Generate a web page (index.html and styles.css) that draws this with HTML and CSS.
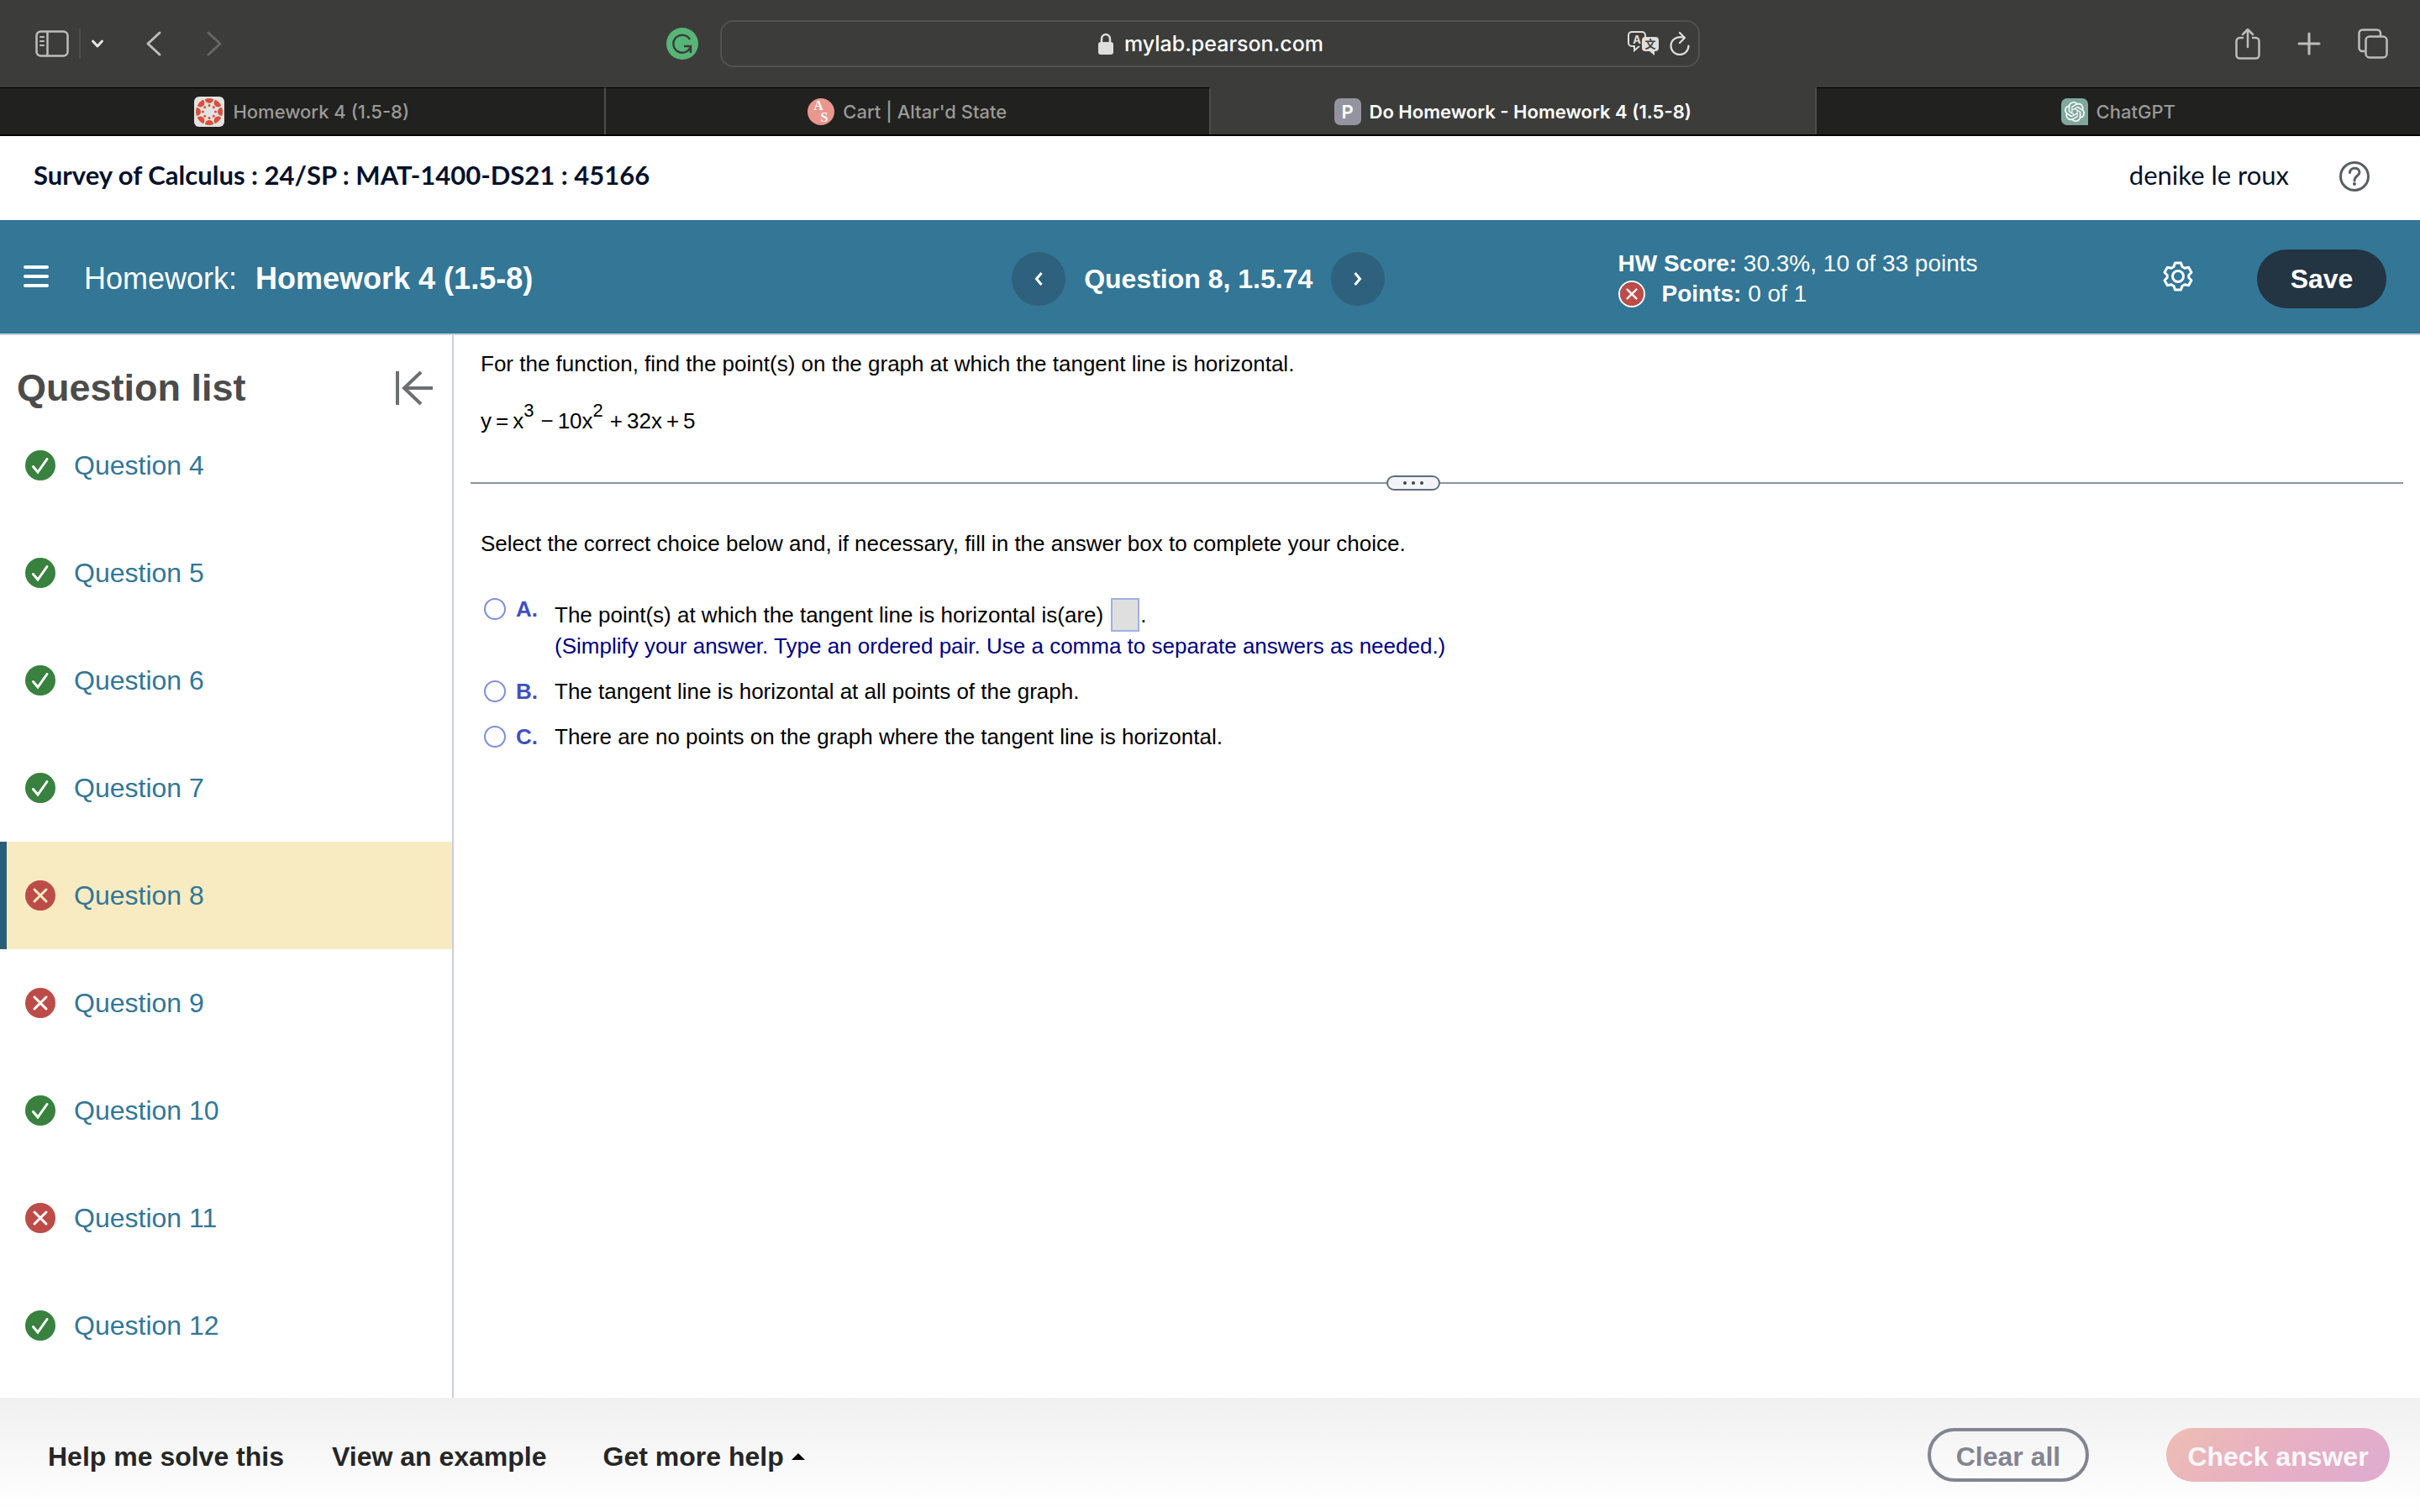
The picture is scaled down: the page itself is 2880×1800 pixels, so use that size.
FILE: index.html
```html
<!DOCTYPE html>
<html lang="en">
    <head>
        <meta charset="utf-8">
        <title>Do Homework - Homework 4 (1.5-8)</title>
        <link rel="stylesheet" href="styles.css">
    </head>
    <body>
        <!-- shared status icons -->
        <svg class="defs" width="0" height="0">
            <symbol id="ok" viewBox="0 0 36 36">
                <circle cx="18" cy="18" r="18" fill="#38813f"/>
                <path d="M9.500 19.500l5.500 6.500L26 10.500" fill="none" stroke="#fff" stroke-width="3" stroke-linecap="round"/>
            </symbol>
            <symbol id="bad" viewBox="0 0 36 36">
                <circle cx="18" cy="18" r="18" fill="#bd4c48"/>
                <path d="M11 11l14 14M25 11L11 25" stroke="currentColor" stroke-width="3" stroke-linecap="round"/>
            </symbol>
        </svg>

        <div class="toolbar">
            <div class="tools">
                <button class="icon" aria-label="Sidebar">
                    <svg width="40" height="32" viewBox="0 0 40 32" fill="none" stroke="#bdbdbb" stroke-width="2.500" stroke-linecap="round">
                        <rect x="1.500" y="1.500" width="37" height="29" rx="5"/>
                        <path d="M14.500 2v28"/><path d="M6 8h4M6 13h4M6 18h4" stroke-width="2"/>
                    </svg>
                </button>
                <span class="split"></span>
                <button class="icon down" aria-label="Tab groups">
                    <svg width="16" height="12" viewBox="0 0 16 12" fill="none" stroke="#e6e6e5" stroke-width="3" stroke-linecap="round" stroke-linejoin="round"><path d="M2.500 3L8 9l5.500-6"/></svg>
                </button>
                <button class="icon back" aria-label="Back">
                    <svg width="20" height="32" viewBox="0 0 20 32" fill="none" stroke="#bdbdbb" stroke-width="3" stroke-linecap="round" stroke-linejoin="round"><path d="M17 3L3 16l14 13"/></svg>
                </button>
                <button class="icon forward" aria-label="Forward">
                    <svg width="20" height="32" viewBox="0 0 20 32" fill="none" stroke="#666664" stroke-width="3" stroke-linecap="round" stroke-linejoin="round"><path d="M3 3l14 13L3 29"/></svg>
                </button>
                <button class="icon grammar" aria-label="Grammarly">
                    <svg width="38" height="38" viewBox="0 0 38 38" fill="none" stroke="#3c3c3a" stroke-width="2.500">
                        <circle cx="19" cy="19" r="19" fill="#57b576" stroke="none"/>
                        <path d="M28 14a10.500 10.500 0 1 0 .5 9.500M21 22h8v8"/>
                    </svg>
                </button>
            </div>
            <div class="address">
                <label class="site">
                    <svg width="20" height="26" viewBox="0 0 20 26"><path d="M5 12V7.500a5 5.500 0 0 1 10 0V12" fill="none" stroke="#dededd" stroke-width="2.500"/><rect x="1" y="11" width="18" height="15" rx="3" fill="#dededd"/></svg>
                    <input type="text" value="mylab.pearson.com" aria-label="Address">
                </label>
                <div class="addressTools">
                    <button class="icon" aria-label="Translate">
                        <svg width="38" height="30" viewBox="0 0 38 30">
                            <path d="M14 18l-6 5v-5H5a4 4 0 0 1-4-4V5a4 4 0 0 1 4-4h12a4 4 0 0 1 4 4v2" fill="none" stroke="#dededd" stroke-width="2"/>
                            <text x="11" y="15" class="glyph" fill="#dededd">A</text>
                            <path d="M21 7h12a4 4 0 0 1 4 4v9a4 4 0 0 1-4 4h-1v5l-6-5h-5a4 4 0 0 1-4-4v-9a4 4 0 0 1 4-4z" fill="#dededd"/>
                            <text x="27" y="20" class="glyph" fill="#3c3c3a">文</text>
                        </svg>
                    </button>
                    <button class="icon" aria-label="Reload">
                        <svg width="24" height="30" viewBox="0 0 24 30" fill="none" stroke="#dededd" stroke-width="2.200" stroke-linecap="round" stroke-linejoin="round"><path d="M17 7.500C8 5.500 1.500 10.500 1.500 17.500a10.500 10.500 0 0 0 21 0M12 2l6 6-6 6"/></svg>
                    </button>
                </div>
            </div>
            <div class="tools end">
                <button class="icon" aria-label="Share">
                    <svg width="30" height="38" viewBox="0 0 30 38" fill="none" stroke="#bdbdbb" stroke-width="2.500" stroke-linecap="round" stroke-linejoin="round"><path d="M9 12H5.500a4 4 0 0 0-4 4v16.500a4 4 0 0 0 4 4h19a4 4 0 0 0 4-4V16a4 4 0 0 0-4-4H21M15 23V2M9 8l6-6 6 6"/></svg>
                </button>
                <button class="icon" aria-label="New tab">
                    <svg width="28" height="28" viewBox="0 0 28 28" stroke="#bdbdbb" stroke-width="3" stroke-linecap="round"><path d="M14 2v24M2 14h24"/></svg>
                </button>
                <button class="icon" aria-label="Tab overview">
                    <svg width="36" height="36" viewBox="0 0 36 36" fill="none" stroke="#bdbdbb" stroke-width="2.500"><rect x="9.500" y="9.500" width="25" height="25" rx="4.500"/><path d="M9 27H5.500a4 4 0 0 1-4-4V5.500a4 4 0 0 1 4-4H23a4 4 0 0 1 4 4V9"/></svg>
                </button>
            </div>
        </div>

        <div class="tabs">
            <a class="tab" href="#">
                <svg width="36" height="36" viewBox="0 0 36 36">
                    <rect width="36" height="36" rx="6" fill="#e2e2e0"/>
                    <g fill="#d9503b">
                        <g id="petals"><path d="M13 3Q18 1 23 3A5 5 0 0 1 13 3z"/><circle cx="18" cy="10.500" r="1.500"/></g>
                        <use href="#petals" transform="rotate(45 18 18)"/>
                        <use href="#petals" transform="rotate(90 18 18)"/>
                        <use href="#petals" transform="rotate(135 18 18)"/>
                        <use href="#petals" transform="rotate(180 18 18)"/>
                        <use href="#petals" transform="rotate(225 18 18)"/>
                        <use href="#petals" transform="rotate(270 18 18)"/>
                        <use href="#petals" transform="rotate(315 18 18)"/>
                    </g>
                </svg>
                Homework 4 (1.5-8)
            </a>
            <a class="tab" href="#">
                <svg width="32" height="32" viewBox="0 0 32 32">
                    <circle cx="16" cy="16" r="16" fill="#e9968d"/>
                    <text x="13" y="14" class="serif">A</text>
                    <text x="20" y="28" class="serif">S</text>
                </svg>
                Cart | Altar'd State
            </a>
            <a class="tab active" href="#">
                <span class="letter">P</span>
                Do Homework - Homework 4 (1.5-8)
            </a>
            <a class="tab" href="#">
                <svg width="32" height="32" viewBox="0 0 32 32">
                    <path d="M7 0h18a7 7 0 0 1 7 7v25H7a7 7 0 0 1-7-7V7a7 7 0 0 1 7-7z" fill="#80a89d"/>
                    <path transform="translate(4 4)" fill="#fff" d="M22.2819 9.8211a5.9847 5.9847 0 0 0-.5157-4.9108 6.0462 6.0462 0 0 0-6.5098-2.9A6.0651 6.0651 0 0 0 4.9807 4.1818a5.9847 5.9847 0 0 0-3.9977 2.9 6.0462 6.0462 0 0 0 .7427 7.0966 5.98 5.98 0 0 0 .511 4.9107 6.051 6.051 0 0 0 6.5146 2.9001A5.9847 5.9847 0 0 0 13.2599 24a6.0557 6.0557 0 0 0 5.7718-4.2058 5.9894 5.9894 0 0 0 3.9977-2.9001 6.0557 6.0557 0 0 0-.7475-7.0729zm-9.022 12.6081a4.4755 4.4755 0 0 1-2.8764-1.0408l.1419-.0804 4.7783-2.7582a.7948.7948 0 0 0 .3927-.6813v-6.7369l2.02 1.1686a.071.071 0 0 1 .038.052v5.5826a4.504 4.504 0 0 1-4.4945 4.4944zm-9.6607-4.1254a4.4708 4.4708 0 0 1-.5346-3.0137l.142.0852 4.783 2.7582a.7712.7712 0 0 0 .7806 0l5.8428-3.3685v2.3324a.0804.0804 0 0 1-.0332.0615L9.74 19.9502a4.4992 4.4992 0 0 1-6.1408-1.6464zM2.3408 7.8956a4.485 4.485 0 0 1 2.3655-1.9728V11.6a.7664.7664 0 0 0 .3879.6765l5.8144 3.3543-2.0201 1.1685a.0757.0757 0 0 1-.071 0l-4.8303-2.7865A4.504 4.504 0 0 1 2.3408 7.872zm16.5963 3.8558L13.1038 8.364 15.1192 7.2a.0757.0757 0 0 1 .071 0l4.8303 2.7913a4.4944 4.4944 0 0 1-.6765 8.1042v-5.6772a.79.79 0 0 0-.407-.667zm2.0107-3.0231l-.142-.0852-4.7735-2.7818a.7759.7759 0 0 0-.7854 0L9.409 9.2297V6.8974a.0662.0662 0 0 1 .0284-.0615l4.8303-2.7866a4.4992 4.4992 0 0 1 6.6802 4.66zM8.3065 12.863l-2.02-1.1638a.0804.0804 0 0 1-.038-.0567V6.0742a4.4992 4.4992 0 0 1 7.3757-3.4537l-.142.0805L8.704 5.459a.7948.7948 0 0 0-.3927.6813zm1.0976-2.3654l2.602-1.4998 2.6069 1.4998v2.9994l-2.5974 1.4997-2.6067-1.4997Z"/>
                </svg>
                ChatGPT
            </a>
        </div>

        <div class="course">
            <span class="courseName">Survey of Calculus : 24/SP : MAT-1400-DS21 : 45166</span>
            <span class="user">denike le roux</span>
            <button class="icon" aria-label="Help">
                <svg width="36" height="36" viewBox="0 0 36 36" fill="none" stroke="#595f60" stroke-width="3"><circle cx="18" cy="18" r="16.500"/><path d="M12.500 13.500c0-7 11.500-7 11.500-.5 0 4.500-6 4.500-6 10" stroke-linecap="round"/><circle cx="18" cy="27" r="2" fill="#595f60" stroke="none"/></svg>
            </button>
        </div>

        <div class="assignment">
            <div class="title">
                <button class="icon" aria-label="Menu">
                    <svg width="30" height="28" viewBox="0 0 30 28" stroke="#fff" stroke-width="4" stroke-linecap="round"><path d="M2 3h26M2 14h26M2 25h26"/></svg>
                </button>
                <span>Homework:</span>
                <b>Homework 4 (1.5-8)</b>
            </div>
            <div class="nav">
                <button class="round" aria-label="Previous question">
                    <svg width="10" height="16" viewBox="0 0 10 16" fill="none" stroke="#fff" stroke-width="3"><path d="M8.500 1L2.500 8l6 7"/></svg>
                </button>
                <b>Question 8, 1.5.74</b>
                <button class="round" aria-label="Next question">
                    <svg width="10" height="16" viewBox="0 0 10 16" fill="none" stroke="#fff" stroke-width="3"><path d="M1.500 1l6 7-6 7"/></svg>
                </button>
            </div>
            <div class="score">
                <div><b>HW Score:</b> 30.3%, 10 of 33 points</div>
                <div class="points">
                    <svg class="ring" width="32" height="32"><use href="#bad"/></svg>
                    <span><b>Points:</b> 0 of 1</span>
                </div>
            </div>
            <button class="icon" aria-label="Settings">
                <svg width="36" height="36" viewBox="0 0 36 36" fill="none" stroke="#fff" stroke-width="3" stroke-linejoin="round">
                    <path d="M14.500 2h7l1.500 4.500 3 1.700 4.600-1 3.400 6-3.200 3.300v3l3.200 3.300-3.400 6-4.600-1-3 1.700-1.500 4.500h-7L13 29.500l-3-1.700-4.600 1-3.400-6 3.200-3.300v-3L2 13.200l3.400-6 4.600 1 3-1.700z"/><circle cx="18" cy="18" r="6.500"/>
                </svg>
            </button>
            <button class="save">Save</button>
        </div>

        <div class="page">
            <div class="sidebar">
                <div class="listHead">
                    <h1>Question list</h1>
                    <button class="icon" aria-label="Collapse">
                        <svg width="46" height="42" viewBox="0 0 46 42" fill="none" stroke="#6a7070" stroke-width="4"><path d="M3 1v40M31 2L11 21l20 19M11 21h34"/></svg>
                    </button>
                </div>
                <a class="question" href="#"><svg width="36" height="36"><use href="#ok"/></svg>Question 4</a>
                <a class="question" href="#"><svg width="36" height="36"><use href="#ok"/></svg>Question 5</a>
                <a class="question" href="#"><svg width="36" height="36"><use href="#ok"/></svg>Question 6</a>
                <a class="question" href="#"><svg width="36" height="36"><use href="#ok"/></svg>Question 7</a>
                <a class="question current" href="#"><svg width="36" height="36"><use href="#bad"/></svg>Question 8</a>
                <a class="question" href="#"><svg width="36" height="36"><use href="#bad"/></svg>Question 9</a>
                <a class="question" href="#"><svg width="36" height="36"><use href="#ok"/></svg>Question 10</a>
                <a class="question" href="#"><svg width="36" height="36"><use href="#bad"/></svg>Question 11</a>
                <a class="question" href="#"><svg width="36" height="36"><use href="#ok"/></svg>Question 12</a>
            </div>

            <div class="work">
                <p class="prompt">For the function, find the point(s) on the graph at which the tangent line is horizontal.</p>
                <p class="equation">y<i>=</i>x<sup>3</sup><i>−</i>10x<sup>2</sup><i>+</i>32x<i>+</i>5</p>
                <div class="divider">
                    <button class="grip" aria-label="Resize"><span></span><span></span><span></span></button>
                </div>
                <p class="prompt">Select the correct choice below and, if necessary, fill in the answer box to complete your choice.</p>
                <div class="choices">
                    <div class="choice first">
                        <input type="radio" name="choice" id="a">
                        <label class="key" for="a">A.</label>
                        <div>
                            <div class="fill"><label for="blank">The point(s) at which the tangent line is horizontal is(are)</label><input class="blank" type="text" id="blank">.</div>
                            <div class="hint">(Simplify your answer. Type an ordered pair. Use a comma to separate answers as needed.)</div>
                        </div>
                    </div>
                    <div class="choice">
                        <input type="radio" name="choice" id="b">
                        <label class="key" for="b">B.</label>
                        <label for="b">The tangent line is horizontal at all points of the graph.</label>
                    </div>
                    <div class="choice">
                        <input type="radio" name="choice" id="c">
                        <label class="key" for="c">C.</label>
                        <label for="c">There are no points on the graph where the tangent line is horizontal.</label>
                    </div>
                </div>
            </div>
        </div>

        <div class="footer">
            <button class="help">Help me solve this</button>
            <button class="help">View an example</button>
            <button class="help more">Get more help <span class="caret"></span></button>
            <button class="clear">Clear all</button>
            <button class="check">Check answer</button>
        </div>
    </body>
</html>
```

FILE: styles.css
```css
* {
    box-sizing: border-box;
}

body {
    margin: 0;
    height: 100vh;
    display: flex;
    flex-direction: column;
    overflow: hidden;
    font-family: "Liberation Sans", Arial, sans-serif;
    font-size: 26px;
    line-height: 32px;
    color: #000;
    background-color: white;
}

button {
    font: inherit;
    color: inherit;
    border: 0;
    padding: 0;
    background: none;
}

a {
    text-decoration: none;
}

svg {
    display: block;
    flex: none;
}

.defs {
    position: absolute;
}

.icon {
    flex: none;
}

/* browser chrome */
.toolbar {
    display: grid;
    grid-template-columns: 1fr 40.5% 1fr;
    align-items: center;
    height: 104px;
    flex: none;
    background-color: #3c3c3a;
    font-family: Inter, sans-serif;
}

.tools {
    display: flex;
    align-items: center;
    padding-left: 42px;
}

.tools.end {
    justify-content: flex-end;
    gap: 44px;
    padding-right: 38px;
}

.split {
    width: 2px;
    height: 36px;
    margin: 0 12px;
    background-color: #4d4d4b;
}

.back {
    margin-left: 49px;
}

.forward {
    margin-left: 52px;
}

.grammar {
    margin-left: auto;
    margin-right: 26px;
}

.address {
    display: grid;
    grid-template-columns: 1fr auto 1fr;
    align-items: center;
    height: 56px;
    border: 2px solid #525250;
    border-radius: 16px;
}

.site {
    grid-column: 2;
    display: flex;
    align-items: center;
    gap: 12px;
    padding-left: 12px;
}

.site input {
    width: 248px;
    height: 40px;
    padding: 0;
    border: 0;
    background: none;
    color: white;
    font: 500 25px Inter, sans-serif;
}

.addressTools {
    display: flex;
    justify-content: flex-end;
    gap: 12px;
    padding-right: 10px;
}

.glyph {
    font: bold 13px Inter, "Noto Sans CJK SC", sans-serif;
    text-anchor: middle;
}

.serif {
    font: bold 16px "Liberation Serif", serif;
    fill: white;
    text-anchor: middle;
}

.tabs {
    display: flex;
    height: 58px;
    flex: none;
    background-color: #21211f;
    border-bottom: 2px solid #000;
    font: 500 22px Inter, sans-serif;
}

.tab {
    flex: 1;
    display: flex;
    align-items: center;
    justify-content: center;
    gap: 10px;
    color: #9a9a98;
    border-top: 1px solid #000;
    border-right: 2px solid #4d4d4b;
}

.tab:last-child {
    border-right: 0;
}

.tab.active {
    color: white;
    font-weight: 600;
    background-color: #3c3c3a;
    border-top-color: #3c3c3a;
}

.letter {
    width: 32px;
    height: 32px;
    line-height: 32px;
    text-align: center;
    border-radius: 7px;
    background-color: #9494a0;
}

/* course header */
.course {
    display: flex;
    align-items: center;
    height: 100px;
    flex: none;
    padding: 0 60px 4px 40px;
    color: #05112a;
    font-family: Lato, sans-serif;
    font-size: 31px;
}

.courseName,
.user {
    padding-bottom: 4px;
}

.courseName {
    font-weight: bold;
}

.user {
    margin-left: auto;
    margin-right: 60px;
}

.assignment {
    display: grid;
    grid-template-columns: 42.4% 25.4% 1fr auto auto;
    align-items: center;
    height: 137px;
    flex: none;
    padding-top: 4px;
    padding-right: 40px;
    color: white;
    background-color: #337696;
    border-bottom: 2px solid #c7d1de;
    font-size: 32px;
}

.assignment .icon {
    padding-bottom: 6px;
}

.title {
    display: flex;
    align-items: center;
    padding-left: 28px;
    font-size: 36px;
}

.title span {
    margin-left: 42px;
    margin-right: 22px;
}

.nav {
    display: flex;
    align-items: center;
    gap: 22px;
}

.round {
    display: flex;
    align-items: center;
    justify-content: center;
    width: 64px;
    height: 64px;
    border-radius: 50%;
    background-color: #2e617d;
}

.score {
    font-size: 28px;
    line-height: 36px;
}

.points {
    display: flex;
    align-items: center;
    gap: 20px;
}

.ring {
    border: 2px solid white;
    border-radius: 50%;
}

.save {
    width: 154px;
    height: 70px;
    margin-left: 76px;
    border-radius: 35px;
    font-weight: bold;
    background-color: #233442;
}

/* question list */
.page {
    flex: 1;
    display: flex;
    min-height: 0;
}

.sidebar {
    width: 540px;
    flex: none;
    overflow: hidden;
    border-right: 2px solid #c9cfdf;
}

.listHead {
    display: flex;
    align-items: center;
    justify-content: space-between;
    padding: 35px 22px 0 20px;
}

.listHead h1 {
    margin: 0;
    font-size: 45px;
    line-height: 56px;
    color: #4b4b4b;
}

.question {
    display: flex;
    align-items: center;
    gap: 22px;
    height: 128px;
    padding-left: 22px;
    border-left: 8px solid transparent;
    font-size: 32px;
    color: #337696;
}

.question svg {
    color: white;
}

.question.current {
    border-left-color: #285f78;
    background-color: #f8ebc1;
}

.question.current svg {
    color: #f8ebc1;
}

/* exercise */
.work {
    flex: 1;
    padding: 18px 20px 0;
}

.prompt,
.equation {
    margin: 0 12px;
}

.equation {
    margin-top: 36px;
}

.equation i {
    font-style: normal;
    margin: 0 5px;
}

.equation sup {
    font-size: 22px;
    line-height: 0;
    vertical-align: 14px;
    margin-right: 3px;
}

.divider {
    position: relative;
    height: 18px;
    margin: 49px 0 47px;
    background: linear-gradient(#8993a3, #8993a3) center / 100% 2px no-repeat;
}

.grip {
    position: absolute;
    left: calc(50% - 60px);
    display: flex;
    align-items: center;
    justify-content: center;
    gap: 6px;
    width: 64px;
    height: 18px;
    border: 2px solid #5f6f80;
    border-radius: 9px;
    background-color: #f2f4f7;
}

.grip span {
    width: 4px;
    height: 4px;
    border-radius: 50%;
    background-color: #444;
}

.choices {
    display: flex;
    flex-direction: column;
    gap: 22px;
    margin: 49px 16px 0;
}

.choice {
    display: flex;
    align-items: center;
}

.choice.first {
    align-items: flex-start;
}

.choice input[type=radio] {
    appearance: none;
    width: 26px;
    height: 26px;
    margin: 0 12px 0 0;
    border: 2px solid #7f8fdb;
    border-radius: 50%;
}

.key {
    width: 46px;
    line-height: 26px;
    font-weight: bold;
    color: #3f51bf;
}

.fill {
    display: flex;
    align-items: center;
}

.blank {
    width: 34px;
    height: 40px;
    margin: 0 1px 0 9px;
    border: 2px solid #9fb0e3;
    background-color: #dfdfdf;
}

.hint {
    padding-top: 1px;
    color: #000080;
}

/* bottom bar */
.footer {
    display: flex;
    align-items: center;
    height: 136px;
    flex: none;
    padding: 0 36px 0 57px;
    background: linear-gradient(#f0f0f0, #fff);
    font-size: 32px;
    font-weight: bold;
    color: #262626;
}

.help {
    margin-right: 57px;
    padding-top: 4px;
}

.more {
    display: flex;
    align-items: center;
    gap: 9px;
    padding-left: 10px;
}

.caret {
    border: 8px solid transparent;
    border-top: 0;
    border-bottom-color: #000;
}

.clear {
    width: 192px;
    height: 64px;
    margin-left: auto;
    margin-right: 92px;
    padding-top: 4px;
    border: 4px solid #828591;
    border-radius: 32px;
    color: #828591;
}

.check {
    width: 266px;
    height: 64px;
    padding-top: 4px;
    border-radius: 32px;
    color: #f8f8fa;
    background: linear-gradient(135deg, #edbeb2, #e9b2c0 40%, #e5aec8 65%, #deacd0);
}
```
